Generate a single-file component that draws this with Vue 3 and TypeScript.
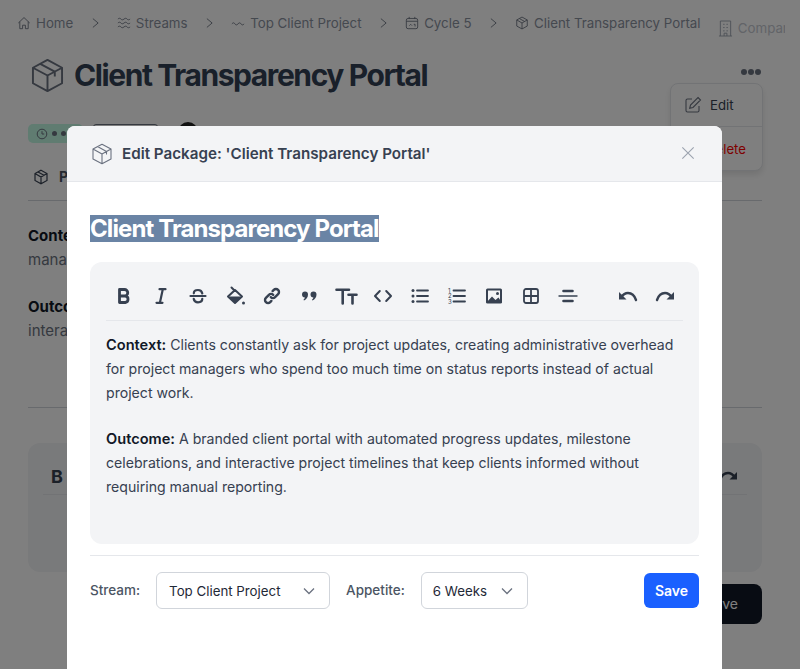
<script setup lang="ts">
const crumbs = ['Home', 'Streams', 'Top Client Project', 'Cycle 5', 'Client Transparency Portal']
const toolbar = ['bold', 'italic', 'strike', 'paint', 'link', 'quote', 'size', 'code', 'ul', 'ol', 'image', 'table', 'rule']
</script>

<template>
  <div class="page">
    <div class="backdrop-content">
      <nav class="crumbs">
        <template v-for="(label, i) in crumbs" :key="label">
          <span class="crumb">
            <svg v-if="i === 0" class="crumb-icon" viewBox="0 0 16 16"><path d="M1.5 8 8 1.8 14.5 8M3.2 6.5V14.5h3.2V10.5h3.2v4h3.2V6.5" /></svg>
            <svg v-else-if="i === 1" class="crumb-icon" viewBox="0 0 16 16"><path d="M1 3.5c1.5-1.2 2.5-1.2 3.5 0s2 1.2 3.5 0 2.5-1.2 3.5 0 2 1.2 3.5 0M1 8c1.5-1.2 2.5-1.2 3.5 0s2 1.2 3.5 0 2.5-1.2 3.5 0 2 1.2 3.5 0M1 12.5c1.5-1.2 2.5-1.2 3.5 0s2 1.2 3.5 0 2.5-1.2 3.5 0 2 1.2 3.5 0" /></svg>
            <svg v-else-if="i === 2" class="crumb-icon" viewBox="0 0 16 16"><path d="M1 9c1.5-1.6 2.5-1.6 3.5 0s2 1.6 3.5 0 2.5-1.6 3.5 0 2 1.6 3.5 0" /></svg>
            <svg v-else-if="i === 3" class="crumb-icon" viewBox="0 0 16 16"><rect x="1.5" y="2.8" width="13" height="11.7" rx="2" /><path d="M1.5 6h13M4.8 1v2.5M11.2 1v2.5M5 11l1.5-1.5L8 11M10 9.5h1.5V12" /></svg>
            <svg v-else class="crumb-icon" viewBox="0 0 16 16"><path d="M8 1.2 14 4.5v7L8 14.8 2 11.5v-7zM2 4.5 8 8l6-3.5M8 8v6.8M5 2.9l6 3.4" /></svg>
            {{ label }}
          </span>
          <svg v-if="i < crumbs.length - 1" class="crumb-chevron" viewBox="0 0 8 12"><path d="M1 1l6 5-6 5" /></svg>
        </template>
        <span class="company">
          <svg class="company-icon" viewBox="0 0 16 18"><path d="M1 17h14M2.5 17V1h11v16M5.5 4.5h1.5M9 4.5h1.5M5.5 8h1.5M9 8h1.5M5.5 11.5h1.5M9 11.5h1.5M6.5 17v-3h3v3" /></svg>
          <span class="company-name">Company</span>
        </span>
      </nav>

      <header class="pkg-head">
        <svg class="pkg-icon" viewBox="0 0 34 36"><path d="M17 2 32 10v16L17 34 2 26V10zM2 10l15 8 15-8M17 18v16M9.5 6l15 8v5" /></svg>
        <h1>Client Transparency Portal</h1>
      </header>

      <div class="meta">
        <span class="badge">
          <svg viewBox="0 0 12 12"><circle cx="6" cy="6" r="4.8" /><path d="M6 3.2V6h2.2" /></svg>
          <i></i><i></i><i></i>
        </span>
        <span class="badge-grey"></span>
        <span class="avatar"></span>
      </div>

      <div class="tabs">
        <svg viewBox="0 0 16 16"><path d="M8 1.2 14 4.5v7L8 14.8 2 11.5v-7zM2 4.5 8 8l6-3.5M8 8v6.8M5 2.9l6 3.4" /></svg>
        <b>Package</b>
      </div>

      <section class="body-copy">
        <p><b>Context:</b> Clients constantly ask for project updates, creating administrative overhead for project<br />managers who spend too much time on status reports</p>
        <p><b>Outcome:</b> A branded client portal with automated progress updates, milestone celebrations, and<br />interactive project timelines</p>
      </section>

      <div class="comment-box">
        <div class="comment-tools">
          <b>B</b>
          <svg class="tool" viewBox="0 0 24 24"><path class="s24 butt" d="M19 13.5C17 10.5 14.5 9 12 9c-3.5 0-6.5 2.5-8 7" /><path class="f" d="M21 8l-7.5 7.5H21z" /></svg>
        </div>
      </div>
      <div class="comment-foot"><span class="dark-btn">Save</span></div>

      <div class="menu-dots"><i></i><i></i><i></i></div>
      <div class="menu">
        <div class="menu-item">
          <svg viewBox="0 0 18 18"><path d="M8 3H3.5A1.5 1.5 0 0 0 2 4.5v10A1.5 1.5 0 0 0 3.5 16h10a1.5 1.5 0 0 0 1.5-1.5V10M14 1.5l2.5 2.5L9 11.5l-3.3.8.8-3.3z" /></svg>
          Edit
        </div>
        <div class="menu-item danger">Delete</div>
      </div>
    </div>

    <div class="overlay"></div>

    <div class="modal">
      <div class="modal-head">
        <svg class="modal-icon" viewBox="0 0 20 22"><path d="M10 1.2 19 6v10l-9 4.8L1 16V6zM1 6l9 5 9-5M10 11v9.8M5.5 3.6l9 5v3" /></svg>
        <span class="modal-title">Edit Package: 'Client Transparency Portal'</span>
        <svg class="close" viewBox="0 0 16 16"><path d="M1.5 1.5l13 13M14.5 1.5l-13 13" /></svg>
      </div>

      <div class="modal-body">
        <h2 class="title-field"><span>Client Transparency Portal</span></h2>

        <div class="editor">
          <div class="toolbar">
            <div class="tool-group">
              <svg v-for="tool in toolbar" :key="tool" class="tool" viewBox="0 0 24 24">
                <path v-if="tool === 'bold'" class="s28" d="M7.5 5.5h5a3.2 3.2 0 0 1 0 6.5h-5m0 0h5.8a3.3 3.3 0 0 1 0 6.5H7.5V5.5" />
                <path v-else-if="tool === 'italic'" class="s22" d="M10.5 5.2h6M7.5 18.8h6M13.8 5.2l-2.9 13.6" />
                <path v-else-if="tool === 'strike'" class="s22" d="M4.5 12h15M16.3 9.5c-.4-2.2-2-3.5-4.3-3.5s-4.2 1.2-4.2 3.3M7.7 14.8c.4 2.2 2 3.5 4.3 3.5s4.3-1.2 4.3-3.5" />
                <template v-else-if="tool === 'paint'">
                  <path class="s2" d="M5 12.5l7-6.5 7 6.5-7 6.5zM8.5 3.5 12 7" />
                  <path class="f" d="M5 12.5h14l-7 6.5z" />
                  <circle class="f" cx="20.5" cy="19" r="1.5" />
                </template>
                <path v-else-if="tool === 'link'" class="s24" d="M10.8 13.2a3 3 0 0 0 4.3 0l3-3a3 3 0 0 0-4.3-4.3l-1.2 1.2M13.2 10.8a3 3 0 0 0-4.3 0l-3 3a3 3 0 0 0 4.3 4.3l1.2-1.2" />
                <template v-else-if="tool === 'quote'">
                  <path class="f" d="M5 10.5a3 3 0 1 1 6 0c0 2.8-1.5 4.8-4 6l-.6-.8c1-.9 1.4-1.7 1.5-2.3A3 3 0 0 1 5 10.5z" />
                  <path class="f" d="M13.5 10.5a3 3 0 1 1 6 0c0 2.8-1.5 4.8-4 6l-.6-.8c1-.9 1.4-1.7 1.5-2.3a3 3 0 0 1-2.9-2.9z" />
                </template>
                <path v-else-if="tool === 'size'" class="s26 butt" d="M2.5 5.8h12.5M8.7 5.8v13.7M14.5 10.8h8M18.5 10.8v8.7" />
                <path v-else-if="tool === 'code'" class="s2" d="M8.8 7 4 12l4.8 5M15.2 7 20 12l-4.8 5" />
                <template v-else-if="tool === 'ul'">
                  <circle class="f" cx="5" cy="6.5" r="1.5" /><circle class="f" cx="5" cy="12" r="1.5" /><circle class="f" cx="5" cy="17.5" r="1.5" />
                  <path class="s18" d="M9 6.5h11M9 12h11M9 17.5h11" />
                </template>
                <template v-else-if="tool === 'ol'">
                  <text class="ol-num" x="3" y="8.5">1</text><text class="ol-num" x="3" y="14">2</text><text class="ol-num" x="3" y="19.5">3</text>
                  <path class="s18" d="M8.5 6.5H20M8.5 12H20M8.5 17.5H20" />
                </template>
                <template v-else-if="tool === 'image'">
                  <rect class="s2" x="5" y="5.5" width="14" height="13" rx=".5" />
                  <path class="f" d="M4 19l6-6.5 3.5 3.5 3-2.5 3.5 5.5z" />
                  <circle class="f" cx="15.5" cy="9.5" r="1.5" />
                </template>
                <path v-else-if="tool === 'table'" class="s18" d="M7 5h10a2 2 0 0 1 2 2v10a2 2 0 0 1-2 2H7a2 2 0 0 1-2-2V7a2 2 0 0 1 2-2zM12 5v14M5 12h14" />
                <template v-else>
                  <path class="s14 butt" d="M3 12h18" />
                  <path class="s26" d="M7.5 7h9M7.5 17h9" />
                </template>
              </svg>
            </div>
            <div class="tool-group history">
              <svg class="tool" viewBox="0 0 24 24"><path class="s24 butt" d="M5 13.5C7 10.5 9.5 9 12 9c3.5 0 6.5 2.5 8 7" /><path class="f" d="M3 8l7.5 7.5H3z" /></svg>
              <svg class="tool" viewBox="0 0 24 24"><path class="s24 butt" d="M19 13.5C17 10.5 14.5 9 12 9c-3.5 0-6.5 2.5-8 7" /><path class="f" d="M21 8l-7.5 7.5H21z" /></svg>
            </div>
          </div>
          <div class="editor-text">
            <p><b>Context:</b> Clients constantly ask for project updates, creating administrative overhead for project managers who spend too much time on status reports instead of actual project work.</p>
            <p><b>Outcome:</b> A branded client portal with automated progress updates, milestone celebrations, and interactive project timelines that keep clients informed without requiring manual reporting.</p>
          </div>
        </div>

        <div class="form-row">
          <label>Stream:</label>
          <div class="select stream">
            Top Client Project
            <svg viewBox="0 0 12 8"><path d="M1 1.5l5 5 5-5" /></svg>
          </div>
          <label>Appetite:</label>
          <div class="select appetite">
            6 Weeks
            <svg viewBox="0 0 12 8"><path d="M1 1.5l5 5 5-5" /></svg>
          </div>
          <button class="save" type="button">Save</button>
        </div>
      </div>
    </div>
  </div>
</template>

<style>
html, body { margin: 0; overflow: hidden; background: #fff; }
</style>

<style scoped>
.page {
  position: relative;
  width: 800px;
  height: 669px;
  overflow: hidden;
  background: #fff;
  font-family: Inter, "Liberation Sans", sans-serif;
  color: #374151;
}
.backdrop-content {
  position: relative;
  height: 100%;
  box-sizing: border-box;
  padding: 14px 38px 0 28px;
}
.crumbs {
  display: flex;
  align-items: flex-start;
  width: max-content;
  margin-left: -11px;
  gap: 18.3px;
  height: 36px;
  font-size: 13.3px;
  line-height: 18px;
  color: #8b929f;
  white-space: nowrap;
}
.crumb { display: flex; flex: none; align-items: center; gap: 5px; }
.crumb-icon { width: 14px; height: 14px; flex: none; fill: none; stroke: #6b7280; stroke-width: 1; }
.crumb-chevron { width: 7px; height: 12px; flex: none; margin-top: 3px; fill: none; stroke: #6b7280; stroke-width: 1; }
.company { display: flex; flex: none; align-items: center; gap: 5px; margin: 5px 0 0 -1px; color: #c4c8d0; }
.company-icon { width: 15px; height: 17px; flex: none; fill: none; stroke: #9ca3af; stroke-width: 1; }
.company-name { width: 47px; overflow: hidden; }
.pkg-head { display: flex; align-items: center; gap: 10px; height: 50px; margin-left: 3px; }
.pkg-icon { width: 33px; height: 35px; fill: none; stroke: #6b7280; stroke-width: 2; stroke-linejoin: round; }
h1 { margin: 0; font-size: 30px; line-height: 36px; font-weight: 700; letter-spacing: -1.42px; color: #334155; }
.meta { display: flex; align-items: flex-start; gap: 10px; margin-top: 24px; height: 30px; }
.badge { display: flex; align-items: center; gap: 4px; width: 55px; height: 19px; box-sizing: border-box; padding-left: 8px; border-radius: 5px; background: #c0f8e2; }
.badge svg { width: 12px; height: 12px; fill: none; stroke: #6b7280; stroke-width: 1; }
.badge i { width: 5px; height: 5px; border-radius: 50%; background: #6b7280; }
.badge-grey { width: 65px; height: 18px; border: 1px solid #6b7280; border-radius: 3px; box-sizing: border-box; }
.avatar { width: 20px; height: 20px; margin: -2px 0 0 10px; border-radius: 50%; background: #222; }
.tabs { display: flex; align-items: center; gap: 10px; height: 48px; padding-left: 5px; border-bottom: 1px solid #d1d5db; box-sizing: border-box; margin-top: -1px; font-size: 14px; color: #4b5563; }
.tabs svg { width: 16px; height: 16px; fill: none; stroke: #374151; stroke-width: 1.2; }
.body-copy { height: 207px; border-bottom: 1px solid #d1d5db; padding-top: 23px; box-sizing: border-box; font-size: 15px; line-height: 24px; color: #6b7280; }
.body-copy p { margin: 0 0 23px; white-space: nowrap; }
.body-copy b { color: #111827; }
.comment-box { height: 129px; margin-top: 35px; padding: 15px 15px 0; box-sizing: border-box; border-radius: 12px; background: #f3f4f6; }
.comment-tools { display: flex; justify-content: space-between; align-items: center; height: 36px; padding: 0 7px 0 8px; border-bottom: 1px solid #e5e7eb; font-size: 18px; color: #374151; }
.comment-foot { display: flex; justify-content: flex-end; margin-top: 12px; }
.dark-btn { width: 80px; height: 40px; border-radius: 8px; background: #111827; color: #fff; font-size: 14px; line-height: 40px; text-align: right; padding-right: 24px; box-sizing: border-box; }
.menu-dots { position: absolute; top: 69px; left: 741px; display: flex; gap: 1px; }
.menu-dots i { width: 6px; height: 6px; border-radius: 50%; background: #6b7280; }
.menu { position: absolute; top: 83px; left: 670px; width: 93px; height: 88px; box-sizing: border-box; background: #fff; border: 1px solid #e5e7eb; border-radius: 8px; box-shadow: 0 4px 6px rgba(0, 0, 0, .1); font-size: 13.2px; color: #374151; }
.menu-item { display: flex; align-items: center; gap: 8px; height: 43px; box-sizing: border-box; padding: 0 0 1px 13px; border-bottom: 1px solid #e5e7eb; }
.menu-item svg { width: 18px; height: 18px; fill: none; stroke: #6b7280; stroke-width: 1.1; }
.menu-item.danger { border-bottom: 0; color: #ff0000; padding: 1px 0 0 35px; }
.overlay { position: absolute; inset: 0; background: rgba(0, 0, 0, .5); }
.modal { position: absolute; top: 126px; left: 67px; width: 655px; height: 560px; background: #fff; border-radius: 8px 8px 0 0; overflow: hidden; }
.modal-head { display: flex; align-items: center; gap: 10px; height: 56px; box-sizing: border-box; padding: 0 27px 0 25px; background: #f3f4f6; border-bottom: 1px solid #e5e7eb; }
.modal-icon { width: 20px; height: 22px; fill: none; stroke: #6b7280; stroke-width: 1.1; stroke-linejoin: round; }
.modal-title { flex: 1; font-size: 15.2px; font-weight: 600; color: #374151; }
.close { width: 14px; height: 14px; margin-top: -1px; fill: none; stroke: #9ca3af; stroke-width: 1.3; }
.modal-body { padding: 33px 23px 0; }
.title-field { margin: 0 0 20px; font-size: 24px; line-height: 27px; font-weight: 700; letter-spacing: -0.9px; color: #fff; }
.title-field span { display: inline-block; background: #6a84a5; }
.editor { height: 282px; box-sizing: border-box; padding: 16px; background: #f3f4f6; border-radius: 12px; }
.toolbar { display: flex; justify-content: space-between; height: 43px; box-sizing: border-box; padding: 6px 6px 12px; border-bottom: 1px solid #e5e7eb; }
.tool-group { display: flex; gap: 13px; }
.tool { width: 24px; height: 24px; flex: none; }
.tool .f { fill: #374151; stroke: none; }
.tool path:not(.f), .tool rect { fill: none; stroke: #374151; stroke-linecap: round; stroke-linejoin: round; }
.tool .butt { stroke-linecap: butt; }
.s14 { stroke-width: 1.4; }
.s18 { stroke-width: 1.8; }
.s2 { stroke-width: 2; }
.s22 { stroke-width: 2.2; }
.s24 { stroke-width: 2.4; }
.s26 { stroke-width: 2.6; }
.s28 { stroke-width: 2.8; }
.ol-num { font-size: 6px; fill: #374151; }
.editor-text { padding-top: 12px; font-size: 14.12px; line-height: 24px; color: #374151; }
.editor-text p { margin: 0 0 22px; }
.editor-text b { color: #111827; font-size: 14.6px; font-weight: 600; }
.form-row { display: flex; align-items: center; margin-top: 11px; padding-top: 16px; border-top: 1px solid #e5e7eb; font-size: 14px; }
.form-row label { margin-top: -1px; color: #4b5563; font-weight: 500; font-size: 13.5px; }
.select { display: flex; align-items: center; justify-content: space-between; height: 37px; box-sizing: border-box; padding: 0 14px 0 12px; border: 1px solid #d1d5db; border-radius: 6px; background: #fff; color: #1f2937; font-size: 13.3px; }
.select svg { width: 12px; height: 8px; fill: none; stroke: #6b7280; stroke-width: 1.3; }
.stream { width: 174px; margin: 0 16px; }
.appetite { width: 107px; margin-left: 16px; padding-left: 11px; }
.save { margin-left: auto; width: 55px; height: 35px; padding: 0; border: 0; border-radius: 6px; background: #1a60ff; color: #fff; font: 600 14px Inter, sans-serif; }
</style>
